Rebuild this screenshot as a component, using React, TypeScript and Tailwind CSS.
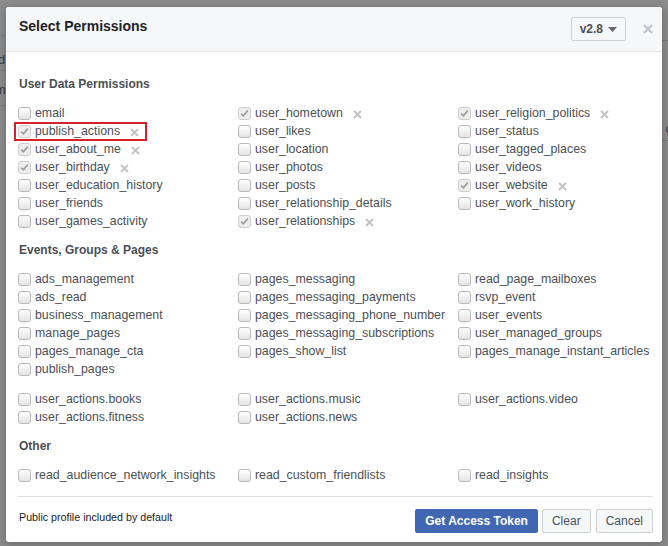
import React from "react";

type Perm = { name: string; checked?: boolean; flagged?: boolean };

const userData: (Perm | null)[][] = [
  [{ name: "email" }, { name: "user_hometown", checked: true }, { name: "user_religion_politics", checked: true }],
  [{ name: "publish_actions", checked: true, flagged: true }, { name: "user_likes" }, { name: "user_status" }],
  [{ name: "user_about_me", checked: true }, { name: "user_location" }, { name: "user_tagged_places" }],
  [{ name: "user_birthday", checked: true }, { name: "user_photos" }, { name: "user_videos" }],
  [{ name: "user_education_history" }, { name: "user_posts" }, { name: "user_website", checked: true }],
  [{ name: "user_friends" }, { name: "user_relationship_details" }, { name: "user_work_history" }],
  [{ name: "user_games_activity" }, { name: "user_relationships", checked: true }, null],
];

const eventsPages: (Perm | null)[][] = [
  [{ name: "ads_management" }, { name: "pages_messaging" }, { name: "read_page_mailboxes" }],
  [{ name: "ads_read" }, { name: "pages_messaging_payments" }, { name: "rsvp_event" }],
  [{ name: "business_management" }, { name: "pages_messaging_phone_number" }, { name: "user_events" }],
  [{ name: "manage_pages" }, { name: "pages_messaging_subscriptions" }, { name: "user_managed_groups" }],
  [{ name: "pages_manage_cta" }, { name: "pages_show_list" }, { name: "pages_manage_instant_articles" }],
  [{ name: "publish_pages" }, null, null],
];

const actions: (Perm | null)[][] = [
  [{ name: "user_actions.books" }, { name: "user_actions.music" }, { name: "user_actions.video" }],
  [{ name: "user_actions.fitness" }, { name: "user_actions.news" }, null],
];

const other: (Perm | null)[][] = [
  [{ name: "read_audience_network_insights" }, { name: "read_custom_friendlists" }, { name: "read_insights" }],
];

function Box({ checked }: { checked?: boolean }) {
  return (
    <span
      className={
        checked
          ? "relative block w-[13px] h-[13px] shrink-0 rounded-[3px] border border-[#cfcfcf] bg-[#eeeeee]"
          : "relative block w-[13px] h-[13px] shrink-0 rounded-[3px] border border-[#b9b9b9] bg-linear-to-b from-white to-[#e4e4e4]"
      }
    >
      {checked && (
        <svg className="absolute left-[0px] top-[0px]" width="11" height="11" viewBox="0 0 11 11">
          <path d="M2.2 5.6 L4.4 7.8 L8.8 2.6" fill="none" stroke="#9d9d9d" strokeWidth="1.7" />
        </svg>
      )}
    </span>
  );
}

function Remove() {
  return (
    <svg className="ml-[10px] mt-[2px]" width="9" height="9" viewBox="0 0 9 9">
      <path d="M1 1 L8 8 M8 1 L1 8" stroke="#c2c2c2" strokeWidth="1.8" />
    </svg>
  );
}

function Item({ p }: { p: Perm | null }) {
  if (!p) return <div />;
  return (
    <div className="relative flex items-center h-[18px]">
      <Box checked={p.checked} />
      <span className="ml-[4px] text-[12.35px] leading-[18px] text-[#4b4f56] whitespace-nowrap">{p.name}</span>
      {p.checked && <Remove />}
      {p.flagged && (
        <span className="absolute left-[-4px] top-[0px] w-[133px] h-[19px] border-2 border-[#d3222a]" />
      )}
    </div>
  );
}

function Grid({ rows }: { rows: (Perm | null)[][] }) {
  return (
    <div className="grid grid-cols-[220px_220px_1fr]">
      {rows.flatMap((r, i) => r.map((p, j) => <Item key={`${i}-${j}`} p={p} />))}
    </div>
  );
}

function Heading({ children }: { children: React.ReactNode }) {
  return <div className="ml-[1px] text-[12px] leading-[16px] font-bold text-[#4b4f56]">{children}</div>;
}

export default function App() {
  return (
    <div
      className="relative w-[668px] h-[546px] overflow-hidden bg-[#8b8b8b] pt-[7px] pl-[6px]"
      style={{ fontFamily: '"Liberation Sans", Arial, Helvetica, sans-serif' }}
    >
      {/* page underneath the overlay */}
      <div className="absolute left-0 top-[35px] w-[8px] h-px bg-[#7a7a7a]" />
      <div className="absolute left-[-2px] top-[50px] text-[13px] text-[#3a3a3a]">d</div>
      <div className="absolute left-0 top-[70px] w-[8px] h-px bg-[#7a7a7a]" />
      <div className="absolute left-[-5px] top-[80px] text-[13px] text-[#3a3a3a]">m</div>
      <div className="absolute left-0 top-[105px] w-[8px] h-px bg-[#7a7a7a]" />
      <div className="absolute right-0 top-[40px] w-[8px] h-px bg-[#7a7a7a]" />
      <div className="absolute right-[-4px] top-[119px] text-[13px] text-[#3a3a3a]">c</div>
      <div className="absolute right-0 top-[140px] w-[8px] h-px bg-[#7a7a7a]" />

      <div className="relative w-[656px] h-[535px] bg-white rounded-[3px] flex flex-col shadow-[0_2px_10px_rgba(0,0,0,0.25)]">
        {/* header */}
        <div className="h-[45px] shrink-0 flex items-center pl-[13px] pr-[7px] bg-[#f6f7f9] border-b border-[#e5e5e5] rounded-t-[3px]">
          <div className="-mt-[6px] text-[14px] font-bold text-[#1d2129]">Select Permissions</div>
          <div className="ml-auto flex items-center h-[24px] px-[8px] border border-[#ced0d4] rounded-[2px] bg-[#f6f7f9]">
            <span className="text-[12px] font-bold text-[#4b4f56]">v2.8</span>
            <svg className="ml-[5px]" width="9" height="5" viewBox="0 0 9 5">
              <path d="M0 0 L9 0 L4.5 5 Z" fill="#606770" />
            </svg>
          </div>
          <svg className="ml-[17px] mr-[2px]" width="10" height="10" viewBox="0 0 10 10">
            <path d="M1 1 L9 9 M9 1 L1 9" stroke="#bec2c9" strokeWidth="2" />
          </svg>
        </div>

        {/* body */}
        <div className="flex-1 flex flex-col pl-[12px] pr-[9px] pt-[24px]">
          <Heading>User Data Permissions</Heading>
          <div className="mt-[12px]">
            <Grid rows={userData} />
          </div>
          <div className="mt-[12px]">
            <Heading>Events, Groups &amp; Pages</Heading>
          </div>
          <div className="mt-[12px]">
            <Grid rows={eventsPages} />
          </div>
          <div className="mt-[12px]">
            <Grid rows={actions} />
          </div>
          <div className="mt-[12px]">
            <Heading>Other</Heading>
          </div>
          <div className="mt-[12px]">
            <Grid rows={other} />
          </div>
          <div className="mt-[12px] h-px bg-[#dddfe2]" />

          {/* footer */}
          <div className="flex items-center mt-[12px]">
            <div className="ml-[1px] -mt-[8px] text-[10.7px] text-[#1d2129]">Public profile included by default</div>
            <div className="ml-auto flex items-center">
              <button className="h-[24px] px-[9px] rounded-[2px] border border-[#4267b2] bg-[#4267b2] text-white text-[12px] font-bold">
                Get Access Token
              </button>
              <button className="ml-[4px] h-[24px] px-[9px] rounded-[2px] border border-[#ced0d4] bg-[#f6f7f9] text-[#4b4f56] text-[12px]">
                Clear
              </button>
              <button className="ml-[5px] h-[24px] px-[9px] rounded-[2px] border border-[#ced0d4] bg-[#f6f7f9] text-[#4b4f56] text-[12px]">
                Cancel
              </button>
            </div>
          </div>
        </div>
      </div>
    </div>
  );
}
